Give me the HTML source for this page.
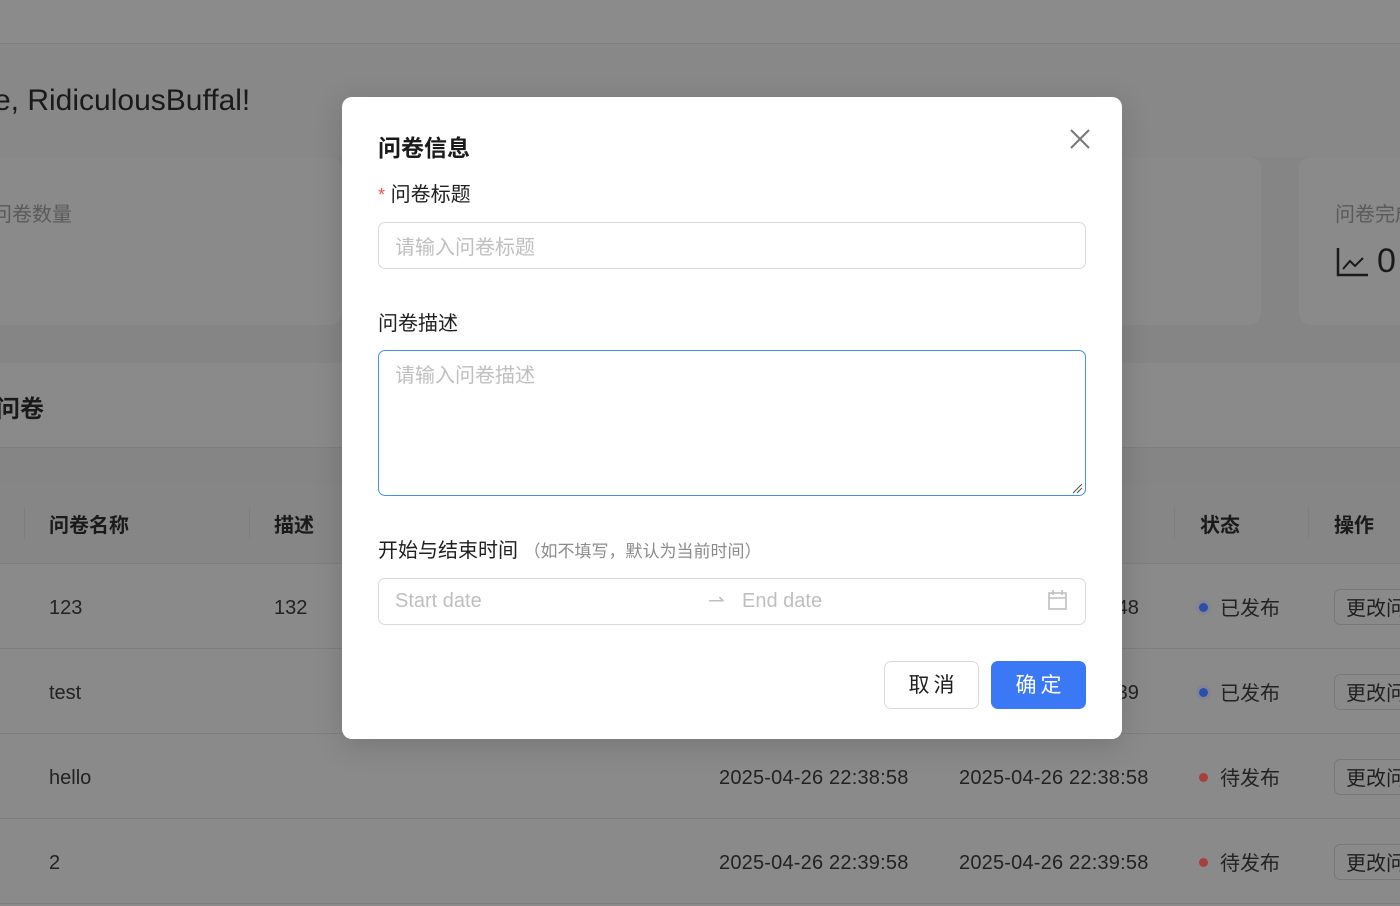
<!DOCTYPE html>
<html><head><meta charset="utf-8"><style>
*{box-sizing:border-box;margin:0;padding:0}
body{width:1400px;height:906px;overflow:hidden;position:relative;background:#858585;font-family:"Liberation Sans","Noto Sans CJK SC",sans-serif;color:#1f1f1f}
.abs{position:absolute}
.t{position:absolute;white-space:nowrap}
.hd{font-weight:bold;font-size:20px;color:#1a1a1a}
.cell{font-size:20px;color:#222}
.line{position:absolute;left:0;width:1400px;height:1px;background:#7e7e7e}
.btnx{position:absolute;left:1334px;width:80px;height:36px;border:1px solid #787878;border-radius:6px;background:#8a8a8a;font-size:20px;padding:2px 0 0 11px;white-space:nowrap;overflow:hidden}
.dot{position:absolute;width:9px;height:9px;border-radius:50%}
.m{position:absolute;left:342px;top:97px;width:780px;height:642px;background:#fff;border-radius:10px;box-shadow:0 6px 30px rgba(0,0,0,.15)}
.lbl{position:absolute;font-size:20px;color:#1f1f1f;white-space:nowrap}
.inp{position:absolute;left:36px;width:708px;border:1px solid #d9d9d9;border-radius:7px}
.ph{position:absolute;font-size:20px;color:#bfbfbf;white-space:nowrap}
</style></head><body>
<div class="abs" style="left:0;top:0;width:1400px;height:43px;background:#8b8b8b"></div>
<div class="line" style="top:43px"></div>
<div class="abs" style="left:0;top:44px;width:1400px;height:113px;background:#888"></div>
<div class="t" style="left:-6px;top:84px;font-size:30px;color:#1a1a1a">e, RidiculousBuffal!</div>
<div class="abs" style="left:-20px;top:157px;width:362px;height:168px;background:#8a8a8a;border-radius:12px"></div>
<div class="t" style="left:-8px;top:198px;font-size:20px;color:#5a5a5a">问卷数量</div>
<div class="abs" style="left:1080px;top:157px;width:181px;height:168px;background:#8a8a8a;border-radius:12px"></div>
<div class="abs" style="left:1299px;top:157px;width:130px;height:168px;background:#8a8a8a;border-radius:12px"></div>
<div class="t" style="left:1335px;top:198px;font-size:20px;color:#5a5a5a">问卷完成</div>
<svg class="abs" style="left:1336px;top:247px" width="34" height="30"><path d="M2 1V28H32" stroke="#1a1a1a" stroke-width="2.5" fill="none"/><path d="M7 22L14 14L19 19L27 11" stroke="#1a1a1a" stroke-width="2" fill="none"/></svg>
<div class="t" style="left:1377px;top:242px;font-size:34px;color:#1a1a1a">0</div>
<div class="abs" style="left:0;top:363px;width:1400px;height:84px;background:#8a8a8a"></div>
<div class="t" style="left:-4px;top:389px;font-size:24px;font-weight:bold;color:#1a1a1a">问卷</div>
<div class="line" style="top:447px"></div>
<div class="abs" style="left:0;top:483px;width:1400px;height:80px;background:#868686"></div>
<div class="abs" style="left:0;top:563px;width:1400px;height:343px;background:#8a8a8a"></div>
<div class="abs" style="left:24px;top:507px;width:1px;height:32px;background:#7e7e7e"></div>
<div class="abs" style="left:249px;top:507px;width:1px;height:32px;background:#7e7e7e"></div>
<div class="abs" style="left:1174px;top:507px;width:1px;height:32px;background:#7e7e7e"></div>
<div class="abs" style="left:1308px;top:507px;width:1px;height:32px;background:#7e7e7e"></div>
<div class="t hd" style="left:49px;top:509px">问卷名称</div>
<div class="t hd" style="left:274px;top:509px">描述</div>
<div class="t hd" style="left:1200px;top:509px">状态</div>
<div class="t hd" style="left:1334px;top:509px">操作</div>
<div class="line" style="top:563px"></div>
<div class="line" style="top:648px"></div>
<div class="line" style="top:733px"></div>
<div class="line" style="top:818px"></div>
<div class="line" style="top:903px"></div>
<div class="t cell" style="left:49px;top:597px">123</div>
<div class="t cell" style="left:274px;top:597px">132</div>
<div class="t cell" style="left:49px;top:682px">test</div>
<div class="t cell" style="left:49px;top:767px">hello</div>
<div class="t cell" style="left:49px;top:852px">2</div>
<div class="t cell" style="left:1100px;top:597px">3:48</div>
<div class="t cell" style="left:1100px;top:682px">2:39</div>
<div class="t cell" style="left:719px;top:767px;letter-spacing:0.2px">2025-04-26 22:38:58</div>
<div class="t cell" style="left:959px;top:767px;letter-spacing:0.2px">2025-04-26 22:38:58</div>
<div class="t cell" style="left:719px;top:852px;letter-spacing:0.2px">2025-04-26 22:39:58</div>
<div class="t cell" style="left:959px;top:852px;letter-spacing:0.2px">2025-04-26 22:39:58</div>
<div class="dot" style="left:1199px;top:603px;background:#2a4fa8;box-shadow:0 0 0 3px #838393"></div>
<div class="dot" style="left:1199px;top:688px;background:#2a4fa8;box-shadow:0 0 0 3px #838393"></div>
<div class="dot" style="left:1199px;top:773px;background:#a8403a"></div>
<div class="dot" style="left:1199px;top:858px;background:#a8403a"></div>
<div class="t cell" style="left:1220px;top:592px">已发布</div>
<div class="t cell" style="left:1220px;top:677px">已发布</div>
<div class="t cell" style="left:1220px;top:762px">待发布</div>
<div class="t cell" style="left:1220px;top:847px">待发布</div>
<div class="btnx" style="top:589px">更改问卷</div>
<div class="btnx" style="top:674px">更改问卷</div>
<div class="btnx" style="top:759px">更改问卷</div>
<div class="btnx" style="top:844px">更改问卷</div>

<div class="m">
 <div class="t" style="left:36px;top:32px;font-size:23px;font-weight:bold;color:#1a1a1a">问卷信息</div>
 <svg class="abs" style="left:728px;top:32px" width="20" height="20"><path d="M1 1L19 19M19 1L1 19" stroke="#777" stroke-width="2"/></svg>
 <div class="lbl" style="left:36px;top:81px"><span style="color:#ff4d4f;font-size:18px">*</span> 问卷标题</div>
 <div class="inp" style="top:125px;height:47px"></div>
 <div class="ph" style="left:53px;top:134px">请输入问卷标题</div>
 <div class="lbl" style="left:36px;top:210px">问卷描述</div>
 <div class="inp" style="top:253px;height:146px;border-color:#4a8cf7"></div>
 <div class="ph" style="left:53px;top:262px">请输入问卷描述</div>
 <svg class="abs" style="left:729px;top:385px" width="12" height="12"><path d="M2 11L11 2M6 11L11 6" stroke="#555" stroke-width="1"/></svg>
 <div class="lbl" style="left:36px;top:437px">开始与结束时间 <span style="font-size:17px;color:#8c8c8c">（如不填写，默认为当前时间）</span></div>
 <div class="inp" style="top:481px;height:47px"></div>
 <div class="ph" style="left:53px;top:493px">Start date</div>
 <div class="ph" style="left:366px;top:491px">⇀</div>
 <div class="ph" style="left:400px;top:493px">End date</div>
 <svg class="abs" style="left:706px;top:493px" width="19" height="20"><rect x="1" y="3" width="17" height="16" fill="none" stroke="#bfbfbf" stroke-width="1.6"/><path d="M1 8H18M5 0V5M14 0V5" stroke="#bfbfbf" stroke-width="1.6"/></svg>
 <div class="abs" style="left:542px;top:564px;width:95px;height:48px;border:1px solid #d9d9d9;border-radius:7px;font-size:21px;text-align:center;line-height:48px;letter-spacing:4px;padding-left:4px">取消</div>
 <div class="abs" style="left:649px;top:564px;width:95px;height:48px;background:#3b78f5;border-radius:7px;font-size:21px;text-align:center;line-height:50px;color:#fff;letter-spacing:4px;padding-left:4px">确定</div>
</div>
</body></html>
